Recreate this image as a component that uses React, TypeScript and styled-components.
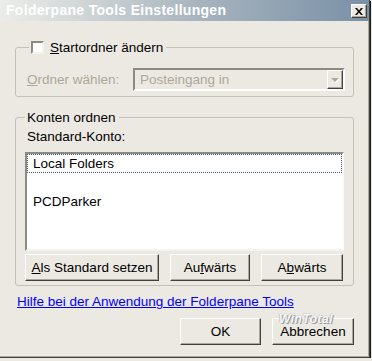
import React from 'react';
import styled, { createGlobalStyle } from 'styled-components';

const GlobalStyle = createGlobalStyle`
  html, body {
    margin: 0;
    padding: 0;
    background: #ece9e2;
  }
  body {
    font-family: 'Liberation Sans', Arial, sans-serif;
    font-size: 13.5px;
  }
`;

const Dialog = styled.div`
  position: relative;
  width: 369px;
  height: 357px;
  display: flex;
  flex-direction: column;
  background: #ece9e2;
  border-right: 1px solid #404040;
  border-bottom: 1px solid #404040;
  box-shadow: 1px 1px 0 0 #1c1c1c, inset -1px -1px 0 0 #aca899;
  color: #000;
`;

const TitleBar = styled.div`
  height: 21px;
  flex: none;
  display: flex;
  align-items: center;
  justify-content: space-between;
  padding: 0 2px 0 6px;
  background: linear-gradient(to right, #ecedea 0%, #cdd3d5 25%, #a5b3bd 55%, #7a90a7 100%);
`;

const Title = styled.span`
  color: #fff;
  font-weight: bold;
  font-size: 14px;
  letter-spacing: 0.3px;
  line-height: 21px;
`;

const CloseButton = styled.div`
  width: 14px;
  height: 12px;
  margin-top: 1px;
  display: flex;
  align-items: center;
  justify-content: center;
  background: #ece9e2;
  border-top: 1px solid #fff;
  border-left: 1px solid #fff;
  border-right: 1px solid #404040;
  border-bottom: 1px solid #404040;
  box-shadow: inset -1px -1px 0 #aca899;
`;

const Body = styled.div`
  flex: 1;
  display: flex;
  flex-direction: column;
  padding: 0 15px;
`;

const GroupBox = styled.fieldset<{ $top: number }>`
  margin: ${(p) => p.$top}px 0 0 0;
  padding: 0;
  border: 1px solid #c3c0b4;
  border-radius: 3px;
  min-width: 0;
`;

const Legend = styled.legend<{ $left: number }>`
  margin-left: ${(p) => p.$left}px;
  padding: 0 3px 0 2px;
  line-height: 15px;
  display: flex;
  align-items: center;
  gap: 6px;
`;

const CheckBox = styled.span`
  width: 9px;
  height: 9px;
  background: #fff;
  border-top: 2px solid #8d8b80;
  border-left: 2px solid #8d8b80;
  border-right: 2px solid #f4f3ee;
  border-bottom: 2px solid #f4f3ee;
`;

const GroupContent = styled.div<{ $pad: string }>`
  display: flex;
  flex-direction: column;
  padding: ${(p) => p.$pad};
`;

const ComboRow = styled.div`
  display: flex;
  align-items: center;
`;

const Label = styled.span<{ $disabled?: boolean; $width?: number }>`
  color: ${(p) => (p.$disabled ? '#aca899' : '#000')};
  width: ${(p) => (p.$width ? `${p.$width}px` : 'auto')};
  line-height: 15px;
  padding-left: ${(p) => (p.$width ? 0 : 2)}px;
`;

const Combo = styled.div`
  flex: 1;
  height: 19px;
  display: flex;
  align-items: stretch;
  background: #ece9e2;
  border-top: 2px solid #8d8b80;
  border-left: 2px solid #8d8b80;
  border-right: 2px solid #fff;
  border-bottom: 2px solid #fff;
`;

const ComboText = styled.span`
  flex: 1;
  padding-left: 5px;
  line-height: 19px;
  color: #aca899;
`;

const DropButton = styled.div`
  width: 14px;
  display: flex;
  align-items: center;
  justify-content: center;
  background: #ece9e2;
  border-top: 1px solid #fff;
  border-left: 1px solid #fff;
  border-right: 1px solid #404040;
  border-bottom: 1px solid #404040;
  box-shadow: inset -1px -1px 0 #aca899;
`;

const Arrow = styled.span`
  width: 0;
  height: 0;
  border-left: 4px solid transparent;
  border-right: 4px solid transparent;
  border-top: 4px solid #aca899;
  filter: drop-shadow(1px 1px 0 #fff);
`;

const ListBox = styled.div`
  height: 95px;
  margin-top: 8px;
  background: #fff;
  border-top: 2px solid #8d8b80;
  border-left: 2px solid #8d8b80;
  border-right: 2px solid #fcfcfa;
  border-bottom: 2px solid #f4f3ee;
  display: flex;
  flex-direction: column;
`;

const ListItem = styled.div<{ $focused?: boolean }>`
  height: 17px;
  line-height: 17px;
  padding-left: 5px;
  border: 1px ${(p) => (p.$focused ? 'dotted #3c5a82' : 'solid transparent')};
  white-space: nowrap;
`;

const ButtonRow = styled.div<{ $justify: string; $top: number }>`
  display: flex;
  justify-content: ${(p) => p.$justify};
  gap: 11px;
  margin-top: ${(p) => p.$top}px;
`;

const Button = styled.div<{ $width: number }>`
  width: ${(p) => p.$width}px;
  height: 25px;
  box-sizing: content-box;
  display: flex;
  align-items: center;
  justify-content: center;
  background: #ece9e2;
  border-top: 1px solid #fff;
  border-left: 1px solid #fff;
  border-right: 1px solid #404040;
  border-bottom: 1px solid #404040;
  box-shadow: inset -1px -1px 0 #aca899;
  line-height: 15px;
`;

const HelpLink = styled.a`
  margin-top: 8px;
  padding-left: 2px;
  color: #0000ff;
  text-decoration: underline;
  line-height: 15px;
`;

const Watermark = styled.span`
  position: absolute;
  left: 279px;
  top: 314px;
  font-size: 12px;
  line-height: 10px;
  font-weight: bold;
  font-style: italic;
  color: #f6f6f6;
  letter-spacing: 0.5px;
  text-shadow: 1px 1px 0 #9a9a9a, -1px 0 0 #c8c8c8, 0 -1px 0 #dcdcdc;
`;

const U = styled.span`
  text-decoration: underline;
`;

export default function App() {
  return (
    <>
      <GlobalStyle />
      <Dialog>
        <TitleBar>
          <Title>Folderpane Tools Einstellungen</Title>
          <CloseButton>
            <svg width="8" height="7" viewBox="0 0 8 7">
              <path d="M0 0h2l2 2.5 2-2.5h2l-3 3.5 3 3.5h-2l-2-2.5-2 2.5h-2l3-3.5z" fill="#000" />
            </svg>
          </CloseButton>
        </TitleBar>
        <Body>
          <GroupBox $top={19}>
            <Legend $left={13}>
              <CheckBox />
              <span>
                <U>S</U>tartordner ändern
              </span>
            </Legend>
            <GroupContent $pad="13px 8px 5px 11px">
              <ComboRow>
                <Label $disabled $width={106}>
                  <U>O</U>rdner wählen:
                </Label>
                <Combo>
                  <ComboText>Posteingang in</ComboText>
                  <DropButton>
                    <Arrow />
                  </DropButton>
                </Combo>
              </ComboRow>
            </GroupContent>
          </GroupBox>

          <GroupBox $top={13}>
            <Legend $left={9}>Konten ordnen</Legend>
            <GroupContent $pad="4px 9px 4px 9px">
              <Label>Standard-Konto:</Label>
              <ListBox>
                <ListItem $focused>Local Folders</ListItem>
                <ListItem />
                <ListItem>PCDParker</ListItem>
              </ListBox>
              <ButtonRow $justify="flex-start" $top={3}>
                <Button $width={132}>
                  <span>
                    <U>A</U>ls Standard setzen
                  </span>
                </Button>
                <Button $width={78}>
                  <span>
                    Au<U>f</U>wärts
                  </span>
                </Button>
                <Button $width={80}>
                  <span>
                    A<U>b</U>wärts
                  </span>
                </Button>
              </ButtonRow>
            </GroupContent>
          </GroupBox>

          <HelpLink href="#">Hilfe bei der Anwendung der Folderpane Tools</HelpLink>

          <ButtonRow $justify="flex-end" $top={9}>
            <Button $width={79}>OK</Button>
            <Button $width={80}>Abbrechen</Button>
          </ButtonRow>
        </Body>
        <Watermark>WinTotal</Watermark>
      </Dialog>
    </>
  );
}
